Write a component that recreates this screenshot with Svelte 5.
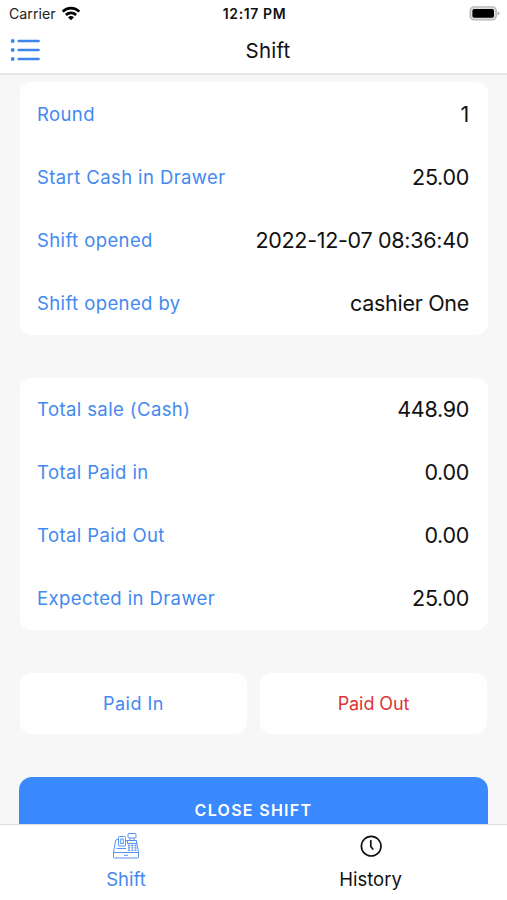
<script lang="ts">
  type Row = { label: string; value: string };

  const shift: Row[] = [
    { label: 'Round', value: '1' },
    { label: 'Start Cash in Drawer', value: '25.00' },
    { label: 'Shift opened', value: '2022-12-07 08:36:40' },
    { label: 'Shift opened by', value: 'cashier One' },
  ];

  const totals: Row[] = [
    { label: 'Total sale (Cash)', value: '448.90' },
    { label: 'Total Paid in', value: '0.00' },
    { label: 'Total Paid Out', value: '0.00' },
    { label: 'Expected in Drawer', value: '25.00' },
  ];

  let tab = $state('shift');
</script>

<div class="screen">
  <div class="status">
    <span class="carrier">
      Carrier
      <svg width="20" height="15" viewBox="0 0 20 15" fill="none" stroke="#000" stroke-width="2.7">
        <path d="M1.7 5.6C6.4.9 13.6.9 18.3 5.6" />
        <path d="M4.9 9C7.8 6.2 12.2 6.2 15.1 9" />
        <path d="M7 11.2Q10 8.8 13 11.2L10 14.3Z" fill="#000" stroke="none" />
      </svg>
    </span>
    <span class="time">12:17 PM</span>
    <svg class="battery" width="31" height="15" viewBox="0 0 31 15">
      <rect x="1.2" y="0.9" width="26" height="13" rx="4" fill="#ddd" stroke="#b5b5b5" stroke-width="1.4" />
      <rect x="3.4" y="3" width="21.6" height="8.800" rx="1.800" fill="#000" />
      <path d="M28.6 5.2Q30.5 6 30.5 7.3T28.6 9.4Z" fill="#aaa" />
    </svg>
  </div>

  <header>
    <button class="menu" aria-label="Menu">
      <svg width="30" height="24" viewBox="0 0 30 24" fill="none" stroke="#3d84ec" stroke-linecap="round">
        <path d="M8.8 3H28.5M8.8 12H28.5M8.8 21H28.5" stroke-width="2.7" />
        <path d="M2.7 3h.01M2.7 12h.01M2.7 21h.01" stroke-width="3.8" />
      </svg>
    </button>
    <h1>Shift</h1>
  </header>

  <main>
    {#each [shift, totals] as rows}
      <section class="card">
        {#each rows as row}
          <div class="row">
            <span class="label">{row.label}</span>
            <span class="value">{row.value}</span>
          </div>
        {/each}
      </section>
    {/each}

    <div class="actions">
      <button>Paid In</button>
      <button class="out">Paid Out</button>
    </div>

    <button class="close">CLOSE SHIFT</button>
  </main>

  <nav>
    <button class:active={tab === 'shift'} onclick={() => (tab = 'shift')}>
      <svg width="28" height="28" viewBox="0 0 28 28" fill="none" stroke="currentColor" stroke-width="0.9">
        <path d="M1.500 20.500h25v4.500q0 1-1 1h-23q-1 0-1-1z" />
        <path d="M1.500 20.500 3.500 9q.2-1.500 1.500-1.500h1.500M13.500 8.500h2M24.500 9.500l2 11" />
        <rect x="6.500" y="4.500" width="7" height="9.500" rx="1" />
        <path d="M8.700 7h2.600v4.500H8.700zM4.500 16.500h9.500" />
        <rect x="16" y="1.500" width="8" height="4.500" rx="1" />
        <path d="M18 6v2.500h4V6M15.500 8.500h9v3h-9zM12 23.300h4" />
        <path d="M16 13.500h8.500M16 15.800h8.500M16 18.100h8.500" stroke-width="1.300" stroke-dasharray="2 1.200" />
      </svg>
      <span>Shift</span>
    </button>
    <button class:active={tab === 'history'} onclick={() => (tab = 'history')}>
      <svg width="28" height="28" viewBox="0 0 28 28" fill="none" stroke="currentColor" stroke-width="1.7">
        <circle cx="14.200" cy="14.200" r="9.800" />
        <path d="M13.800 8.500v6l2 2.500" stroke-linecap="round" stroke-linejoin="round" />
      </svg>
      <span>History</span>
    </button>
  </nav>
</div>

<style>
  :global(body) {
    margin: 0;
  }
  .screen {
    width: 507px;
    height: 900px;
    display: flex;
    flex-direction: column;
    overflow: hidden;
    background: #f7f7f7;
    color: #111;
    font-family: Inter, 'Liberation Sans', sans-serif;
  }
  button {
    padding: 0;
    border: 0;
    background: none;
    color: inherit;
    font: inherit;
  }
  svg {
    display: block;
  }
  .status {
    box-sizing: border-box;
    height: 28px;
    display: grid;
    grid-template-columns: 1fr auto 1fr;
    align-items: center;
    padding: 0 7px 1px 9px;
    background: #fff;
    font-size: 14.2px;
  }
  .carrier {
    display: flex;
    align-items: center;
    gap: 5px;
    color: #222;
  }
  .time {
    font-size: 14px;
    font-weight: 600;
    letter-spacing: 0.6px;
  }
  .battery {
    justify-self: end;
  }
  header {
    box-sizing: border-box;
    height: 47px;
    display: grid;
    grid-template-columns: 39px 1fr 20px;
    align-items: center;
    padding: 0 0 1px 10px;
    border-bottom: 2px solid #e5e5e5;
    background: #fff;
  }
  h1 {
    margin: 0;
    font-size: 20.500px;
    font-weight: 400;
    letter-spacing: 0.2px;
    text-align: center;
  }
  main {
    flex: 1;
    min-height: 0;
    display: flex;
    flex-direction: column;
    gap: 43px;
    padding: 7px 19px 0 20px;
    overflow: hidden;
  }
  .card {
    flex: none;
    height: 252.5px;
    display: grid;
    grid-template-rows: repeat(4, 1fr);
    border-radius: 12px;
    background: #fff;
  }
  .row {
    display: flex;
    align-items: center;
    justify-content: space-between;
    padding: 0 19px 0 17px;
  }
  .label {
    color: #4389ef;
    font-size: 18.5px;
    letter-spacing: 0.4px;
  }
  .value {
    font-size: 21.5px;
    letter-spacing: -0.3px;
  }
  .actions {
    flex: none;
    display: grid;
    grid-template-columns: 1fr 1fr;
    gap: 13px;
    height: 61px;
    padding-right: 1px;
  }
  .actions button {
    border-radius: 12px;
    background: #fff;
    color: #4389ef;
    font-size: 18px;
    letter-spacing: 0.5px;
  }
  .actions .out {
    color: #dc3535;
    letter-spacing: -0.1px;
  }
  .close {
    flex: none;
    height: 66px;
    margin-left: -1px;
    border-radius: 13px;
    background: #3a89ff;
    color: #fff;
    font-size: 16px;
    font-weight: 600;
    letter-spacing: 1.3px;
  }
  nav {
    box-sizing: border-box;
    height: 76px;
    display: grid;
    grid-template-columns: 252px 1fr;
    border-top: 1px solid #ddd;
    background: #fff;
  }
  nav button {
    display: flex;
    flex-direction: column;
    align-items: center;
    gap: 8px;
    padding: 7px 18px 0 0;
    font-size: 18.5px;
    line-height: 22px;
  }
  nav button:first-child {
    padding-right: 0;
  }
  nav .active {
    color: #4389ef;
  }
</style>
